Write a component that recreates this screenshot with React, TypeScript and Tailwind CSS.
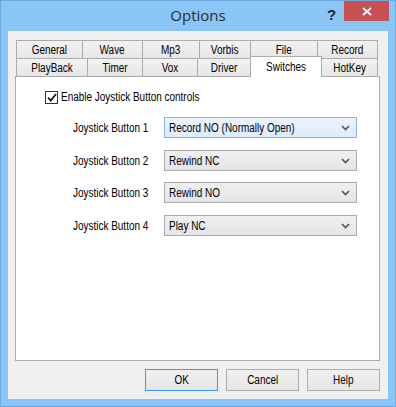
const font = { fontFamily: '"Liberation Sans", Arial, sans-serif' };

const topTabs = [
  { label: 'General', w: 'w-[66px]' },
  { label: 'Wave', w: 'w-[60px]' },
  { label: 'Mp3', w: 'w-[57px]' },
  { label: 'Vorbis', w: 'w-[51px]' },
  { label: 'File', w: 'w-[67px]' },
  { label: 'Record', w: 'w-[61px]' },
];

const bottomTabs = [
  { label: 'PlayBack', w: 'w-[71px]' },
  { label: 'Timer', w: 'w-[55px]' },
  { label: 'Vox', w: 'w-[55px]' },
  { label: 'Driver', w: 'w-[53px]' },
  { label: 'Switches', w: 'w-[72px]', active: true },
  { label: 'HotKey', w: 'w-[56px]' },
];

const rows = [
  { label: 'Joystick Button 1', value: 'Record NO (Normally Open)', mt: 'mt-0', hot: true },
  { label: 'Joystick Button 2', value: 'Rewind NC', mt: 'mt-[12px]' },
  { label: 'Joystick Button 3', value: 'Rewind NO', mt: 'mt-[11px]' },
  { label: 'Joystick Button 4', value: 'Play NC', mt: 'mt-[12px]' },
];

// narrow text, like the old dialog font
const N = ({ children, left = false }: { children: React.ReactNode; left?: boolean }) => (
  <span className={`inline-block whitespace-nowrap scale-x-[0.83] ${left ? 'origin-left' : 'origin-center'}`}>
    {children}
  </span>
);

const Chevron = () => (
  <svg width="9" height="6" viewBox="0 0 9 6" className="text-[#555]">
    <path d="M1 1 L4.5 4.5 L8 1" stroke="currentColor" strokeWidth="1.6" fill="none" />
  </svg>
);

const Button = ({ label, primary = false }: { label: string; primary?: boolean }) => (
  <div
    className={`w-[73px] h-[22px] flex items-center justify-center text-[12px] text-black bg-gradient-to-b from-[#f0f0f0] to-[#e5e5e5] border ${
      primary ? 'border-[#3399ff]' : 'border-[#acacac]'
    }`}
  >
    <N>{label}</N>
  </div>
);

export default function App() {
  return (
    <div className="w-[396px] h-[407px] bg-[#8ac5f7] border border-[#6fa8dc] flex flex-col" style={font}>
      {/* Title bar */}
      <div className="h-[30px] flex relative">
        <div
          className="flex-1 flex items-center justify-center pb-[2px] text-[15px] text-[#2b2b2b]"
          style={{ fontFamily: '"Open Sans", "Noto Sans", sans-serif' }}
        >
          Options
        </div>
        <div className="absolute left-[326px] top-[3px] text-[15px] font-bold text-[#222]">?</div>
        <div className="absolute left-[343px] top-0 w-[45px] h-[20px] bg-[#c75050] flex items-center justify-center">
          <svg width="10" height="9" viewBox="0 0 10 9">
            <path d="M1 1 L9 8 M9 1 L1 8" stroke="white" strokeWidth="1.8" />
          </svg>
        </div>
      </div>

      {/* Client area */}
      <div className="mx-[7px] h-[368px] bg-[#f0f0f0] flex flex-col pt-[9px] pl-[7px] pr-[8px] pb-[8px]">
        {/* Tabs */}
        <div className="ml-[1px] flex h-[18px]">
          {topTabs.map((t, i) => (
            <div
              key={t.label}
              className={`${t.w} h-[18px] border-t border-l border-[#acacac] ${
                i === topTabs.length - 1 ? 'border-r' : ''
              } bg-gradient-to-b from-[#f2f2f2] to-[#e6e6e6] flex items-center justify-center text-[12px] text-black`}
            >
              <N>{t.label}</N>
            </div>
          ))}
        </div>
        <div className="ml-[1px] flex items-end h-[18px] relative z-10">
          {bottomTabs.map((t, i) =>
            t.active ? (
              <div
                key={t.label}
                className={`${t.w} h-[21px] -mb-[1px] border-t border-l border-r border-[#acacac] bg-white flex items-start justify-center pt-[1px] text-[12px] text-black`}
              >
                <N>{t.label}</N>
              </div>
            ) : (
              <div
                key={t.label}
                className={`${t.w} h-[18px] border-t ${
                  bottomTabs[i - 1]?.active ? '' : 'border-l'
                } ${i === bottomTabs.length - 1 ? 'border-r' : ''} border-[#acacac] bg-gradient-to-b from-[#f2f2f2] to-[#e6e6e6] flex items-center justify-center text-[12px] text-black`}
              >
                <N>{t.label}</N>
              </div>
            )
          )}
        </div>

        {/* Panel */}
        <div className="h-[286px] bg-white border border-[#acacac] flex flex-col">
          <div className="mt-[11px] ml-[29px] flex items-center gap-[3px]">
            <div className="w-[13px] h-[13px] border border-[#333] bg-white flex items-center justify-center">
              <svg width="10" height="9" viewBox="0 0 10 9">
                <path d="M1 4.5 L3.8 7.5 L9 1" stroke="#111" strokeWidth="1.8" fill="none" />
              </svg>
            </div>
            <span className="text-[12px] text-black">
              <N left>Enable Joystick Button controls</N>
            </span>
          </div>

          <div className="mt-[11px] flex flex-col">
            {rows.map((r) => (
              <div key={r.label} className={`${r.mt} flex items-center`}>
                <span className="ml-[57px] w-[90px] text-[12px] text-black">
                  <N left>{r.label}</N>
                </span>
                <div
                  className={`ml-[1px] w-[193px] h-[21px] border flex items-center justify-between pl-[4px] pr-[6px] text-[12px] text-black bg-gradient-to-b ${
                    r.hot ? 'border-[#7eb4ea] from-[#ecf4fc] to-[#dcecfc]' : 'border-[#acacac] from-[#f0f0f0] to-[#e5e5e5]'
                  }`}
                >
                  <N left>{r.value}</N>
                  <Chevron />
                </div>
              </div>
            ))}
          </div>
        </div>

        {/* Buttons */}
        <div className="mt-[8px] flex justify-end gap-[8px]">
          <Button label="OK" primary />
          <Button label="Cancel" />
          <Button label="Help" />
        </div>
      </div>
    </div>
  );
}
